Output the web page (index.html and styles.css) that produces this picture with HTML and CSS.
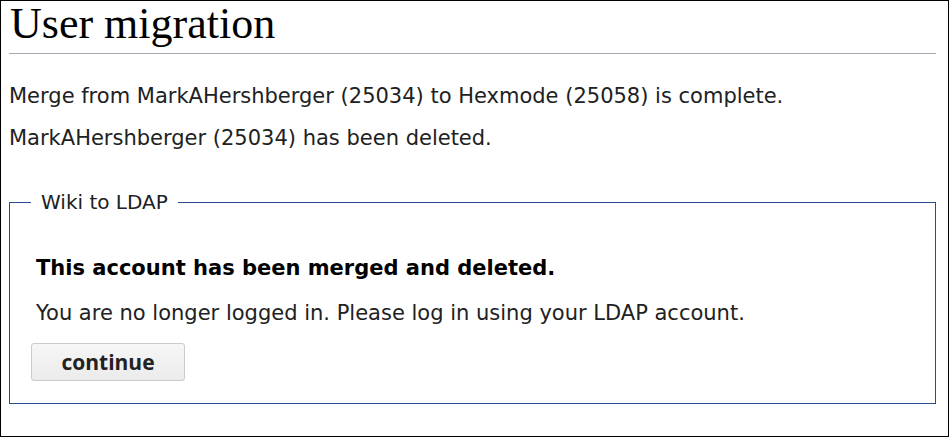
FILE: index.html
```html
<!DOCTYPE html>
<html>
<head>
<meta charset="utf-8">
<link rel="stylesheet" href="styles.css">
</head>
<body>
<div class="frame">
  <h1 class="title">User migration</h1>
  <p class="msg first">Merge from MarkAHershberger (25034) to Hexmode (25058) is complete.</p>
  <p class="msg">MarkAHershberger (25034) has been deleted.</p>
  <fieldset class="box">
    <legend class="legend">Wiki to LDAP</legend>
    <p class="strong">This account has been merged and deleted.</p>
    <p class="note">You are no longer logged in. Please log in using your LDAP account.</p>
    <button class="btn">continue</button>
  </fieldset>
</div>
</body>
</html>
```
FILE: styles.css
```css
html, body {
  margin: 0;
  padding: 0;
  background: #fff;
}
.frame {
  box-sizing: border-box;
  width: 949px;
  height: 437px;
  border: 1px solid #000;
  padding: 0 12px 0 8px;
  font-family: "DejaVu Sans", sans-serif;
  color: #202122;
  font-size: 21px;
}
.title {
  font-family: "Liberation Serif", serif;
  font-weight: normal;
  font-size: 44px;
  line-height: 46px;
  margin: 0;
  padding: 0 0 6px 1px;
  color: #000;
  border-bottom: 1px solid #a2a9b1;
}
.msg {
  margin: 13px 0 0;
  line-height: 29px;
}
.msg.first {
  margin-top: 28px;
}
.box {
  margin: 35px 0 0;
  border: 1px solid #2a4b8d;
  padding: 0 26px 22px 26px;
}
.legend {
  padding: 0 10px;
  margin-left: -5px;
  font-size: 20px;
  line-height: 28px;
}
.strong {
  font-weight: bold;
  margin: 38px 0 0;
  line-height: 29px;
  color: #000;
}
.note {
  margin: 16px 0 0;
  line-height: 29px;
}
.btn {
  display: block;
  margin: 15px 0 0 -5px;
  width: 154px;
  height: 38px;
  border: 1px solid #c8ccd1;
  border-radius: 3px;
  background: linear-gradient(#f6f6f6, #ebebeb);
  font-family: "Open Sans", "DejaVu Sans", sans-serif;
  font-weight: bold;
  font-size: 21px;
  color: #222;
}
```
